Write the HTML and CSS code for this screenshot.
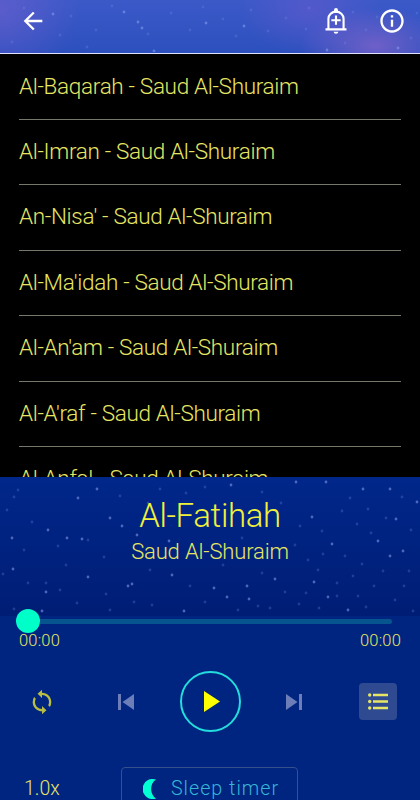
FILE: index.html
```
<!DOCTYPE html>
<html lang="en">

<head>
  <meta charset="utf-8">
  <meta name="viewport" content="width=device-width, initial-scale=1">
  <title>Saud Al-Shuraim</title>
  <link rel="stylesheet" href="styles.css">
</head>

<body>
  <header class="top-bar">
    <svg class="stars" width="420" height="52" viewBox="0 0 420 52">
      <path class="stars-dim" d="M24 8h0M71 16h0M96 30h0M60 35h0M112 6h0M148 34h0M171 13h0M190 30h0M223 19h0M236 36h0M251 10h0M268 31h0M286 18h0M306 29h0M309 8h0M353 12h0M366 30h0M377 17h0M411 38h0M417 13h0M345 43h0M12 42h0M87 47h0M203 7h0" />
      <path class="stars-bright" d="M53 14h0M124 12h0M138 22h0M142 28h0M154 51h0M206 23h0M327 50h0M398 48h0M244 26h0" />
    </svg>
    <button class="icon-btn">
      <svg width="28" height="28" viewBox="0 0 24 24" fill="#fff"><path d="M20 11H7.830l5.590-5.590L12 4l-8 8 8 8 1.410-1.410L7.830 13H20v-2z" /></svg>
    </button>
    <div class="top-actions">
      <button class="icon-btn">
        <svg width="28" height="28" viewBox="0 0 24 24" fill="none" stroke="#fff" stroke-width="1.800">
          <path d="M5.500 19V10a6.500 6 0 0 1 13 0V19M3 19.200h18M12 7.300v8M8 11.300h8" />
          <path d="M10.300 2.600a1.700 1.700 0 0 1 3.400 0V5h-3.400zM10 21.300h4a2 1.600 0 0 1-4 0z" fill="#fff" stroke="none" />
        </svg>
      </button>
      <button class="icon-btn">
        <svg width="28" height="28" viewBox="0 0 24 24" fill="#fff"><path d="M11 7h2v2h-2zm0 4h2v6h-2zm1-9C6.480 2 2 6.480 2 12s4.480 10 10 10 10-4.480 10-10S17.520 2 12 2zm0 18c-4.410 0-8-3.590-8-8s3.590-8 8-8 8 3.590 8 8-3.590 8-8 8z" /></svg>
      </button>
    </div>
  </header>

  <ul class="track-list">
    <li>Al-Baqarah - Saud Al-Shuraim</li>
    <li>Al-Imran - Saud Al-Shuraim</li>
    <li>An-Nisa' - Saud Al-Shuraim</li>
    <li>Al-Ma'idah - Saud Al-Shuraim</li>
    <li>Al-An'am - Saud Al-Shuraim</li>
    <li>Al-A'raf - Saud Al-Shuraim</li>
    <li>Al-Anfal - Saud Al-Shuraim</li>
  </ul>

  <section class="player">
    <svg class="stars" width="420" height="139" viewBox="0 477 420 139">
      <path class="stars-dim" d="M7 510h0M18 490h0M58 546h0M32 522h0M88 540h0M104 557h0M66 565h0M28 583h0M120 496h0M160 489h0M148 503h0M186 493h0M205 487h0M262 492h0M281 503h0M300 526h0M322 531h0M350 498h0M357 524h0M371 533h0M411 530h0M402 497h0M295 545h0M308 560h0M345 556h0M318 570h0M337 583h0M374 586h0M395 600h0M404 586h0M383 571h0M262 573h0M258 606h0M238 610h0M205 602h0M190 586h0M150 570h0M152 605h0M134 602h0M106 594h0M77 603h0M60 590h0M14 609h0M3 574h0M24 550h0M285 592h0M270 608h0M319 608h0M306 593h0M366 607h0M110 610h0M323 554h0M299 604h0M337 596h0M358 596h0M409 571h0M386 518h0M342 511h0M368 509h0M242 538h0M362 564h0M14 497h0M46 583h0M223 565h0M413 611h0M353 576h0" />
      <path class="stars-bright" d="M97 489h0M78 498h0M110 518h0M122 526h0M48 530h0M12 538h0M67 538h0M82 539h0M137 535h0M13 569h0M88 577h0M172 575h0M231 485h0M296 482h0M326 482h0M363 489h0M390 489h0M312 517h0M396 519h0M417 502h0M332 544h0M378 541h0M403 551h0M390 556h0M275 579h0M132 584h0M128 586h0M46 592h0M184 611h0M214 588h0M227 597h0M247 586h0M249 599h0M314 582h0M328 597h0M348 610h0M42 611h0M169 541h0" />
    </svg>
    <h1 class="title">Al-Fatihah</h1>
    <h2 class="artist">Saud Al-Shuraim</h2>

    <div class="seek">
      <div class="seek-thumb"></div>
      <div class="seek-track"></div>
    </div>
    <div class="times">
      <span>00:00</span>
      <span>00:00</span>
    </div>

    <div class="controls">
      <button class="icon-btn">
        <svg width="28" height="28" viewBox="0 0 24 24" fill="#b9bd43"><path d="M12 4V1.500L8.200 5 12 8.500V6c3.310 0 6 2.690 6 6 0 1.010-.250 1.970-.700 2.800l1.460 1.460A7.930 7.930 0 0 0 20 12c0-4.420-3.580-8-8-8zm0 14c-3.310 0-6-2.690-6-6 0-1.010.250-1.970.700-2.800L5.240 7.740A7.930 7.930 0 0 0 4 12c0 4.420 3.580 8 8 8v2.500l3.800-3.500L12 15.500V18z" /></svg>
      </button>
      <button class="icon-btn">
        <svg width="16" height="16" viewBox="0 0 16 16" fill="#6c7db8"><path d="M0 0h3v16H0zM16 0v16L4.500 8z" /></svg>
      </button>
      <button class="play-btn">
        <svg width="16" height="21" viewBox="0 0 16 21" fill="#ff0"><path d="M0 0v21l16-10.500z" /></svg>
      </button>
      <button class="icon-btn">
        <svg width="16" height="16" viewBox="0 0 16 16" fill="#6c7db8"><path d="M13 0h3v16h-3zM0 0v16l11.500-8z" /></svg>
      </button>
      <button class="list-btn">
        <svg width="20" height="17" viewBox="0 0 20 17" fill="#e6e664">
          <circle cx="1.700" cy="2" r="1.700" />
          <circle cx="1.700" cy="8.500" r="1.700" />
          <circle cx="1.700" cy="15" r="1.700" />
          <path d="M5 .800h15v2.400H5zM5 7.300h15v2.400H5zM5 13.800h15v2.400H5z" />
        </svg>
      </button>
    </div>

    <div class="extras">
      <span class="speed">1.0x</span>
      <button class="sleep-btn">
        <svg width="14" height="20" viewBox="0 0 14 20" fill="#00ffd2"><path d="M13 .600A10 10 0 1 0 13 19.400C6.500 15.500 6.500 4.500 13 .600z" /></svg>
        <span>Sleep timer</span>
      </button>
    </div>
  </section>
</body>

</html>
```
FILE: styles.css
```
* {
  box-sizing: border-box;
}

body {
  margin: 0;
  height: 800px;
  display: flex;
  flex-direction: column;
  overflow: hidden;
  background-color: #000;
  color: #e6e664;
  font-family: Roboto, sans-serif;
  font-weight: 300;
}

button {
  display: flex;
  align-items: center;
  justify-content: center;
  padding: 0;
  border: none;
  background: none;
  font: inherit;
  cursor: pointer;
}

svg {
  display: block;
}

.top-bar {
  position: relative;
  flex: none;
  height: 54px;
  padding: 0 14px 12px 19px;
  display: flex;
  align-items: center;
  justify-content: space-between;
  border-bottom: 1px solid #dfe2fa;
  background:
    radial-gradient(ellipse 75px 38px at 375px 46px, rgba(145, 103, 205, 0.65), transparent),
    radial-gradient(ellipse 70px 45px at 310px 10px, rgba(100, 90, 205, 0.6), transparent),
    radial-gradient(ellipse 80px 70px at 0 10px, rgba(105, 94, 205, 0.7), transparent),
    linear-gradient(#3c59c8, #2c50be);
}

.top-bar .icon-btn {
  position: relative;
}

.top-actions {
  display: flex;
  gap: 28px;
}

/* star field behind the bar and the player */
.stars {
  position: absolute;
  top: 0;
  left: 0;
  fill: none;
  stroke-linecap: round;
}

.stars-dim {
  stroke: #7590e8;
  stroke-width: 2.8;
  opacity: 0.27;
}

.stars-bright {
  stroke: #8ba0ef;
  stroke-width: 2.8;
  opacity: 0.55;
}

.track-list {
  flex: none;
  height: 423px;
  margin: 0;
  padding: 0.6px 19px 0;
  overflow: hidden;
  list-style: none;
}

.track-list li {
  height: 65.4px;
  border-bottom: 1px solid #77776a;
  font-size: 22.5px;
  line-height: 62px;
  letter-spacing: -0.32px;
  white-space: nowrap;
}

.player {
  position: relative;
  flex: 1;
  min-height: 0;
  overflow: hidden;
  background: linear-gradient(#00278a, #001d75 139px, #002580 139px);
}

.title,
.artist {
  position: relative;
  margin: 0;
  font-weight: 300;
  text-align: center;
}

.title {
  padding-top: 19px;
  font-size: 33px;
  line-height: 40px;
  letter-spacing: -0.35px;
  color: #f0f03c;
}

.artist {
  padding-top: 3px;
  font-size: 22px;
  line-height: 26px;
  letter-spacing: -0.15px;
}

.seek {
  position: relative;
  display: flex;
  align-items: center;
  margin-top: 44px;
  padding: 0 28px 0 16px;
}

.seek-thumb {
  width: 24px;
  height: 24px;
  border-radius: 50%;
  background-color: #00ffc8;
}

.seek-track {
  flex: 1;
  height: 5px;
  border-radius: 0 3px 3px 0;
  background-color: #07558f;
}

.times {
  display: flex;
  justify-content: space-between;
  padding: 0 19px;
  font-size: 16.5px;
  line-height: 15px;
  letter-spacing: 0.2px;
}

.controls {
  display: grid;
  grid-template-columns: repeat(5, 1fr);
  align-items: center;
  justify-items: center;
  margin-top: 23px;
}

.play-btn {
  width: 61px;
  height: 61px;
  padding-left: 4px;
  border: 2px solid #23dcdc;
  border-radius: 50%;
}

.list-btn {
  width: 38px;
  height: 37px;
  border-radius: 4px;
  background-color: #304a92;
}

.extras {
  display: flex;
  align-items: flex-start;
  margin-top: 35px;
  padding-left: 24px;
}

.speed {
  width: 97px;
  font-size: 19.5px;
  line-height: 43px;
}

.sleep-btn {
  width: 177px;
  height: 43px;
  padding-left: 3px;
  gap: 14px;
  border: 1px solid #35508c;
  border-radius: 4px;
  color: #38b4d6;
  font-size: 19.7px;
  letter-spacing: 1px;
}
```
